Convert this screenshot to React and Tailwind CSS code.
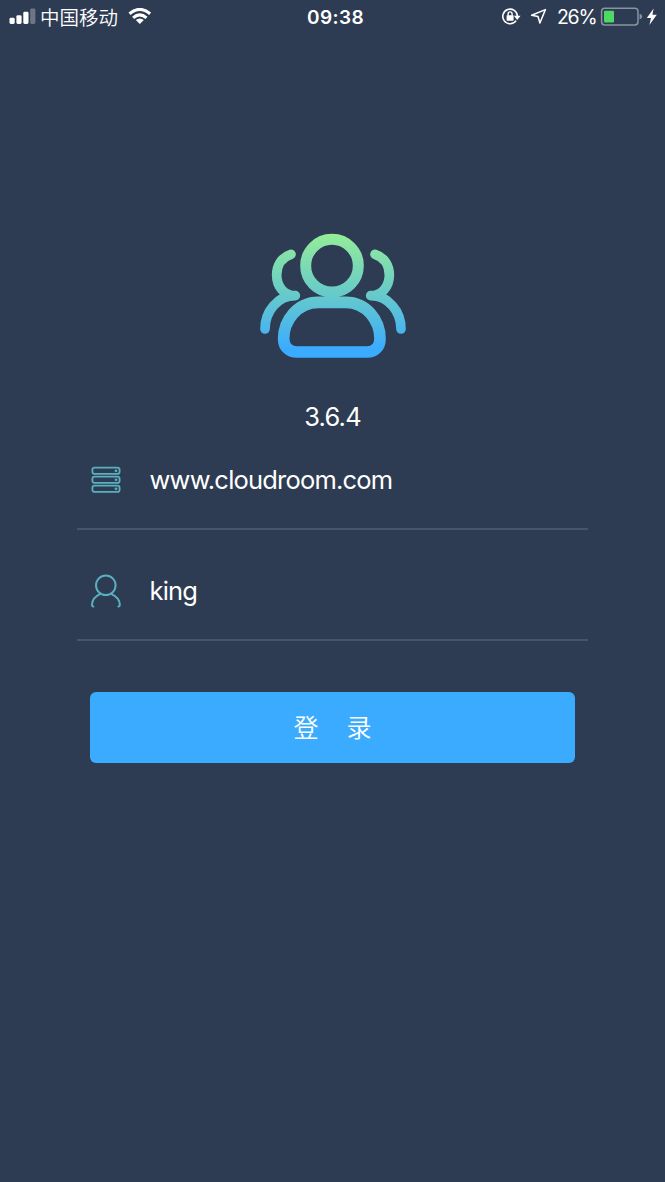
function StatusBar() {
  return (
    <header className="grid h-[34px] grid-cols-[307px_1fr] text-white">
      <div className="flex items-center pl-[9px]">
        <svg className="h-[18px] w-[27px]" viewBox="0 0 27 18" fill="#fff">
          <rect x="0.5" y="9.8" width="5.2" height="6.2" rx="1.4" />
          <rect x="7.4" y="7.2" width="5.2" height="8.8" rx="1.4" />
          <rect x="14.3" y="3.8" width="5.2" height="12.2" rx="1.4" />
          <rect x="21.2" y="0.4" width="5.2" height="15.6" rx="1.4" opacity=".3" />
        </svg>
        <span className="ml-[4px] w-[78px] whitespace-nowrap font-['Noto_Sans_CJK_SC',sans-serif] text-[19.5px] leading-[32px] font-[350]">中国移动</span>
        <svg className="ml-[10px] h-[18px] w-[24px]" viewBox="0 0 24 18" fill="none" stroke="#fff" strokeWidth="3.1">
          <path d="M1.5 5.7Q11.8-2.9 22.1 5.7" />
          <path d="M5.1 9.9Q11.8 4 18.5 9.9" />
          <path d="M11.8 16.1L7.8 12.1Q11.8 8.8 15.8 12.1Z" fill="#fff" stroke="none" />
        </svg>
      </div>
      <div className="flex items-center font-[Inter,sans-serif]">
        <span className="w-[56px] whitespace-nowrap pt-[2px] text-[19px] font-semibold tracking-[0.4px]">09:38</span>
        <div className="ml-auto flex items-center pr-[7px]">
          <svg className="h-[20px] w-[20px]" viewBox="0 0 20 20" fill="none" stroke="#fff" strokeWidth="1.6">
            <path d="M15.1 13.6A7.3 7.3 0 1 1 16.4 9.2" />
            <path d="M12.9 8.7H19.6L16.2 13Z" fill="#fff" stroke="none" />
            <rect x="5.6" y="8.2" width="7" height="5.5" rx=".6" fill="#fff" stroke="none" />
            <path d="M7.1 8.8V6.9A2 2 0 0 1 11.1 6.9V8.8" strokeWidth="1.4" />
          </svg>
          <svg className="ml-[9px] h-[18px] w-[17px]" viewBox="0 0 17 18" fill="none" stroke="#fff" strokeWidth="1.5" strokeLinejoin="round">
            <path d="M15.4 1.6L1.6 7.2L8 8.5L9.9 15Z" />
          </svg>
          <span className="ml-[10px] w-[40px] whitespace-nowrap pt-px text-[19.5px] tracking-[-1.3px]">26%</span>
          <svg className="ml-[3px] h-[20px] w-[44px]" viewBox="0 0 44 20">
            <rect x="1.6" y="1.3" width="36.4" height="16.6" rx="3.2" fill="none" stroke="#fff" strokeOpacity=".45" strokeWidth="1.5" />
            <rect x="4" y="3.7" width="10" height="11.9" rx="1" fill="#4cd964" />
            <path d="M39.6 6.8Q42.2 7.6 42.2 9.6T39.6 12.4Z" fill="#fff" opacity=".45" />
          </svg>
          <svg className="ml-[2px] h-[18px] w-[12px]" viewBox="0 0 12 18" fill="#fff">
            <path d="M7.6.4L.8 9.9H5L3.4 16.9L10.8 6.8H6.4Z" />
          </svg>
        </div>
      </div>
    </header>
  );
}

function Logo() {
  return (
    <svg className="h-[140px] w-[166px]" viewBox="0 0 498 420" fill="none" stroke="url(#logo-gradient)" strokeLinecap="round" strokeLinejoin="round">
      <defs>
        <linearGradient id="logo-gradient" gradientUnits="userSpaceOnUse" x1="0" y1="27" x2="0" y2="375">
          <stop offset="0" stopColor="#94ed99" />
          <stop offset=".5" stopColor="#69cbc8" />
          <stop offset="1" stopColor="#3babff" />
        </linearGradient>
      </defs>
      <g strokeWidth="29">
        <path d="M123 88C94 97 80 123 80 150C80 184 102 212 136 212C82 212 45 260 45 312" />
        <path d="M375 88C404 97 418 123 418 150C418 184 396 212 362 212C416 212 453 260 453 312" />
      </g>
      <circle cx="246" cy="122" r="79" strokeWidth="33" />
      <path d="M101 341C101 288 141 232 205 232H287C351 232 390 288 390 341C390 366 374 381 351 381H141C117 381 101 366 101 341Z" strokeWidth="35" />
    </svg>
  );
}

function ServerIcon() {
  return (
    <svg className="h-[30px] w-[32px]" viewBox="0 0 32 30" fill="none" stroke="#59afbe" strokeWidth="1.8">
      <rect x="2.4" y="2.7" width="27.2" height="6.2" rx="2.2" />
      <rect x="2.4" y="11.7" width="27.2" height="6.2" rx="2.2" />
      <rect x="2.4" y="20.7" width="27.2" height="6.2" rx="2.2" />
      <g fill="#59afbe" stroke="none">
        <circle cx="26" cy="5.8" r="1.4" />
        <circle cx="26" cy="14.8" r="1.4" />
        <circle cx="26" cy="23.8" r="1.4" />
      </g>
    </svg>
  );
}

function UserIcon() {
  return (
    <svg className="h-[36px] w-[32px]" viewBox="0 0 32 36" fill="none" stroke="#59afbe" strokeWidth="2" strokeLinecap="round">
      <circle cx="15.8" cy="12.3" r="9.8" />
      <path d="M10.4 20.8C5.6 23 2.2 27.2 2 31.3Q2 33.5 3.4 33.5" />
      <path d="M21.2 20.8C26 23 29.6 27.2 29.8 31.3Q29.8 33.5 28.4 33.5" />
    </svg>
  );
}

function Field({ icon, value, className }) {
  return (
    <div className={`flex items-center border-b-2 border-[#47556b] pl-[13px] ${className}`}>
      {icon}
      <span className="ml-[27.5px] text-[25.5px] leading-[30px] tracking-[-0.8px]">{value}</span>
    </div>
  );
}

export default function App() {
  return (
    <div className="min-h-[1182px] bg-[#2d3c52] font-[Inter,sans-serif] text-white">
      <StatusBar />
      <main className="flex flex-col items-center pt-[191px]">
        <Logo />
        <p className="mt-[37px] text-[25.5px] leading-[30px] tracking-[-0.8px]">3.6.4</p>
        <div className="-mt-px flex w-[511px] flex-col">
          <Field icon={<ServerIcon />} value="www.cloudroom.com" className="h-[99px]" />
          <Field icon={<UserIcon />} value="king" className="mt-[12px] h-[99px]" />
        </div>
        <button className="mt-[51px] flex h-[71px] w-[485px] items-center justify-center gap-[28px] rounded-[6px] bg-[#3aabff] pb-px font-['Noto_Sans_CJK_SC',sans-serif] text-[25px] font-[350]">
          <span>登</span>
          <span>录</span>
        </button>
      </main>
    </div>
  );
}
